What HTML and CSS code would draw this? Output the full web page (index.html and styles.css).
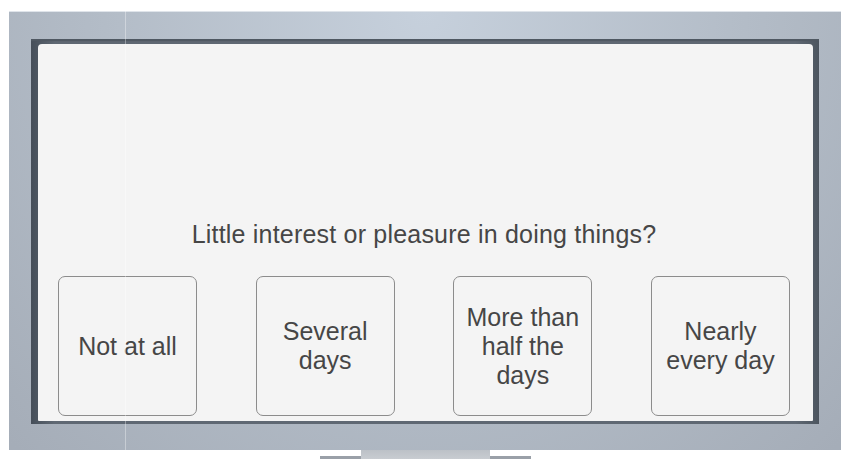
FILE: index.html
```html
<!DOCTYPE html>
<html>

<head>
    <title>PHQ question</title>
    <meta charset='UTF-8'>
    <meta name='viewport' content='width=device-width, initial-scale=1.0'>
    <link rel="stylesheet" href="styles.css">
</head>

<body>
    <div class='monitor'>
        <div class='bezel'>
            <div class='screen'>
                <div class='question'>Little interest or pleasure in doing things?</div>
                <div class='answers'>
                    <button class='answer'>Not at all</button>
                    <button class='answer'>Several<br>days</button>
                    <button class='answer'>More than<br>half the<br>days</button>
                    <button class='answer'>Nearly<br>every day</button>
                </div>
            </div>
        </div>
    </div>
    <div class='stand'>
        <div class='foot'></div>
        <div class='neck'></div>
        <div class='foot'></div>
    </div>
    <div class='seam'></div>
</body>

</html>
```

FILE: styles.css
```css
body {
    margin: 0;
    background-color: #fff;
    font-family: "Liberation Sans", Arial, sans-serif;
    position: relative;
    height: 459px;
    overflow: hidden;
}

.monitor {
    margin: 11px 8px 0 9px;
    height: 439px;
    box-sizing: border-box;
    padding: 27px 22px 27px 22px;
    background: radial-gradient(ellipse 70% 140% at 50% 0%, #c6d0dc 0%, #b3bcc7 55%, #a5adb8 100%);
    border-top: 1px solid #dfe4ea;
}

.bezel {
    height: 385px;
    box-sizing: border-box;
    padding: 5px 6px 3px 7px;
    background: linear-gradient(to right, #454e59 0%, #5f6873 3%, #5f6873 97%, #4c555f 100%);
    box-shadow: inset 0 2px 1px #4f5862;
}

.screen {
    height: 100%;
    box-sizing: border-box;
    background-color: #f4f4f4;
    border-radius: 4px 4px 1px 1px;
    display: flex;
    flex-direction: column;
    justify-content: flex-end;
    padding: 0 23px 5px 20px;
}

.question {
    text-align: center;
    font-size: 25px;
    line-height: 29px;
    letter-spacing: 0.2px;
    color: #464646;
    margin-bottom: 27px;
}

.answers {
    display: flex;
    justify-content: space-between;
}

.answer {
    width: 139px;
    height: 140px;
    box-sizing: border-box;
    background-color: #f4f4f4;
    border: 1px solid #8c8c8c;
    border-radius: 7px;
    font-family: "Liberation Sans", Arial, sans-serif;
    font-size: 25px;
    line-height: 29px;
    color: #464646;
    padding: 0;
    text-align: center;
}

.stand {
    display: flex;
    justify-content: center;
    height: 9px;
    margin-left: 1px;
}

.neck {
    width: 129px;
    background: linear-gradient(#bcc1c7, #c8ccd1);
}

.foot {
    width: 41px;
    margin-top: 6px;
    background-color: #9aa0a8;
}

.seam {
    position: absolute;
    left: 125px;
    top: 11px;
    width: 1px;
    height: 439px;
    background-color: rgba(255, 255, 255, 0.35);
}
```
